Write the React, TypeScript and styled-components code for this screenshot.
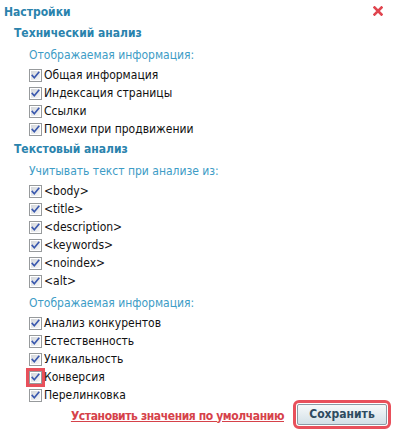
import React from 'react'
import styled, { createGlobalStyle } from 'styled-components'

const GlobalStyle = createGlobalStyle`
  html, body {
    margin: 0;
    padding: 0;
    background: #ffffff;
  }
  body {
    font-family: "DejaVu Sans Condensed", "DejaVu Sans", Tahoma, sans-serif;
    font-size: 12px;
    color: #111;
  }
`

type Group = {
  label: string
  items: { text: string; marked?: boolean }[]
}

type Section = {
  title: string
  groups: Group[]
}

const sections: Section[] = [
  {
    title: 'Технический анализ',
    groups: [
      {
        label: 'Отображаемая информация:',
        items: [
          { text: 'Общая информация' },
          { text: 'Индексация страницы' },
          { text: 'Ссылки' },
          { text: 'Помехи при продвижении' },
        ],
      },
    ],
  },
  {
    title: 'Текстовый анализ',
    groups: [
      {
        label: 'Учитывать текст при анализе из:',
        items: [
          { text: '<body>' },
          { text: '<title>' },
          { text: '<description>' },
          { text: '<keywords>' },
          { text: '<noindex>' },
          { text: '<alt>' },
        ],
      },
      {
        label: 'Отображаемая информация:',
        items: [
          { text: 'Анализ конкурентов' },
          { text: 'Естественность' },
          { text: 'Уникальность' },
          { text: 'Конверсия', marked: true },
          { text: 'Перелинковка' },
        ],
      },
    ],
  },
]

const CheckIcon = () => (
  <svg width="13" height="13" viewBox="0 0 13 13">
    <defs>
      <linearGradient id="cbFill" x1="0" y1="0" x2="1" y2="1">
        <stop offset="0" stopColor="#d3d6da" />
        <stop offset="1" stopColor="#f8f8f8" />
      </linearGradient>
    </defs>
    <rect x="0.5" y="0.5" width="12" height="12" fill="#ffffff" stroke="#979a9c" />
    <rect x="2" y="2" width="9" height="9" fill="url(#cbFill)" />
    <path d="M3.3 6.5 L5.3 8.7 L9.7 3.4" fill="none" stroke="#3a58ae" strokeWidth="1.7" strokeLinecap="square" />
  </svg>
)

const App = () => {
  return (
    <>
      <GlobalStyle />
      <Dialog>
        <Header>
          <Title>Настройки</Title>
          <Close aria-label="Закрыть">
            <svg width="10" height="10" viewBox="0 0 10 10">
              <path d="M1.5 1.5 L8.5 8.5 M8.5 1.5 L1.5 8.5" stroke="#e0454f" strokeWidth="2.6" strokeLinecap="square" />
            </svg>
          </Close>
        </Header>
        {sections.map((section) => (
          <SectionBlock key={section.title}>
            <SectionTitle>{section.title}</SectionTitle>
            {section.groups.map((group, gi) => (
              <GroupBlock key={gi} $first={gi === 0}>
                <GroupLabel>{group.label}</GroupLabel>
                <List>
                  {group.items.map((item) => (
                    <Row key={item.text}>
                      <Box $marked={item.marked}>
                        <CheckIcon />
                      </Box>
                      <RowText>{item.text}</RowText>
                    </Row>
                  ))}
                </List>
              </GroupBlock>
            ))}
          </SectionBlock>
        ))}
        <Footer>
          <ResetLink href="#">Установить значения по умолчанию</ResetLink>
          <SaveButton type="button">Сохранить</SaveButton>
        </Footer>
      </Dialog>
    </>
  )
}

export default App

const Dialog = styled.div`
  width: 393px;
  height: 431px;
  box-sizing: border-box;
  padding: 2px 6px 0 4px;
  display: flex;
  flex-direction: column;
  background: #fff;
`
const Header = styled.div`
  display: flex;
  align-items: center;
  justify-content: space-between;
  height: 20px;
`
const Title = styled.div`
  font-weight: bold;
  font-size: 12px;
  color: #2a83ad;
`
const Close = styled.div`
  width: 10px;
  height: 10px;
  margin-right: 4px;
  margin-top: -2px;
  display: flex;
  cursor: pointer;
`
const SectionBlock = styled.div`
  display: flex;
  flex-direction: column;
  padding-left: 10px;
  margin-top: 1px;
`
const SectionTitle = styled.div`
  font-weight: bold;
  font-size: 12px;
  line-height: 20px;
  color: #2a83ad;
`
const GroupBlock = styled.div<{ $first?: boolean }>`
  display: flex;
  flex-direction: column;
  padding-left: 15px;
  margin-top: ${(p) => (p.$first ? '2px' : '3px')};
`
const GroupLabel = styled.div`
  line-height: 20px;
  color: #3d9cc6;
`
const List = styled.div`
  display: flex;
  flex-direction: column;
  margin-top: 1px;
`
const Row = styled.label`
  display: flex;
  align-items: center;
  height: 18px;
  gap: 1px;
`
const Box = styled.span<{ $marked?: boolean }>`
  display: flex;
  width: 13px;
  height: 13px;
  margin-right: 1px;
  outline: ${(p) => (p.$marked ? '3px solid #e8505b' : 'none')};
  outline-offset: 0;
`
const RowText = styled.span`
  color: #111;
`
const Footer = styled.div`
  display: flex;
  align-items: center;
  justify-content: flex-end;
  gap: 13px;
  height: 20px;
`
const ResetLink = styled.a`
  margin-top: 3px;
  font-weight: bold;
  letter-spacing: -0.4px;
  color: #d6424a;
  text-decoration: underline;
`
const SaveButton = styled.button`
  width: 90px;
  height: 21px;
  padding: 0;
  font-family: inherit;
  font-size: 12px;
  font-weight: bold;
  color: #2e4b60;
  border: 1px solid #8c9ba5;
  border-radius: 2px;
  background: linear-gradient(#f6f9fa, #d3e0e7);
  outline: 3px solid #e8505b;
  outline-offset: 1px;
  cursor: pointer;
`
